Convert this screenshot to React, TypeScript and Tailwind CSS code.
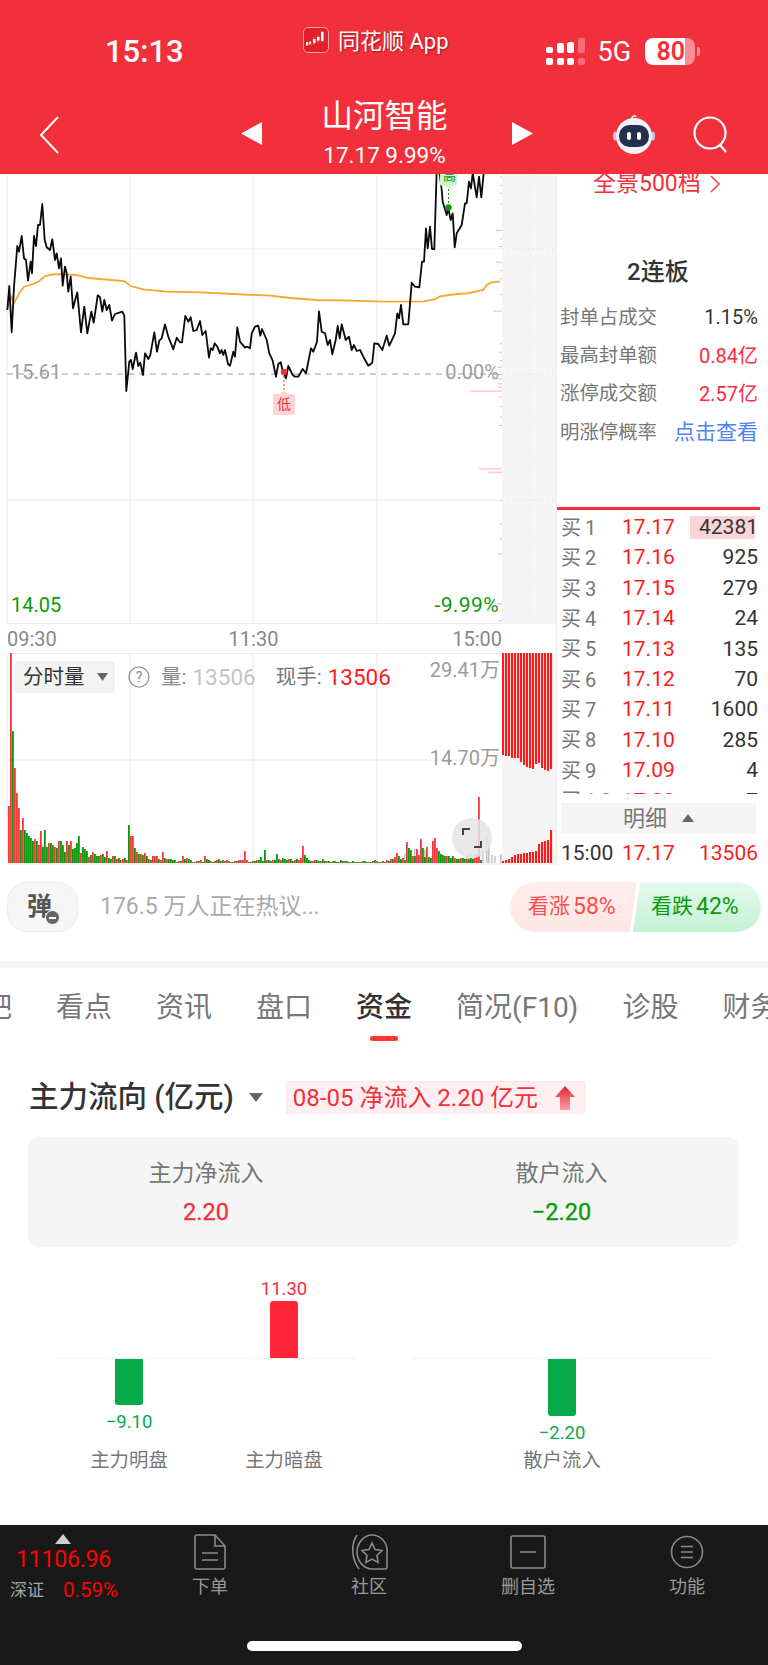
import React from "react";

const font = { fontFamily: 'Roboto, "Noto Sans CJK SC", sans-serif' };

const priceZ: number[][] = [[22,420],[28,348],[35,487],[42,350],[52,228],[57,245],[65,198],[72,265],[78,270],[84,332],[92,275],[96,310],[102,198],[108,228],[114,165],[120,165],[127,102],[134,210],[140,232],[150,240],[157,208],[165,270],[170,250],[177,295],[183,265],[188,347],[195,290],[200,310],[205,365],[212,320],[219,415],[232,367],[243,487],[253,410],[262,490],[274,425],[281,458],[293,376],[300,382],[307,425],[313,390],[320,420],[328,405],[336,452],[345,432],[358,428],[367,425],[373,437],[379,663],[388,575],[393,570],[398,597],[408,548],[415,588],[421,578],[429,615],[435,550],[445,567],[451,555],[463,487],[471,545],[478,512],[485,505],[495,463],[505,500],[520,538],[530,503],[540,517],[546,517],[556,438],[565,455],[572,442],[580,483],[590,480],[600,453],[607,495],[617,483],[627,563],[632,535],[638,540],[644,520],[652,530],[660,550],[665,540],[670,555],[675,540],[684,582],[690,587],[700,545],[705,560],[712,472],[720,515],[735,533],[742,530],[750,535],[755,490],[765,470],[775,467],[781,497],[786,477],[800,510],[808,550],[818,572],[828,620],[835,582],[842,577],[848,603],[858,625],[865,588],[878,615],[885,620],[895,620],[908,597],[918,610],[933,535],[940,545],[951,515],[957,424],[965,485],[975,490],[983,525],[990,510],[997,553],[1007,510],[1013,468],[1019,505],[1025,463],[1037,510],[1047,500],[1055,540],[1062,525],[1070,543],[1080,540],[1090,560],[1105,587],[1117,578],[1123,520],[1135,522],[1147,540],[1160,497],[1168,527],[1185,490],[1192,430],[1197,445],[1203,405],[1210,463],[1225,463],[1235,338],[1245,350],[1258,352],[1266,275],[1272,275],[1278,175],[1283,235],[1290,170],[1296,237],[1303,237],[1310,0],[1318,0],[1325,60],[1328,95],[1340,135],[1345,115],[1352,150],[1358,130],[1364,232],[1370,190],[1385,165],[1395,100],[1400,100],[1407,35],[1413,55],[1418,10],[1430,82],[1437,20],[1444,82],[1452,0]];
const avgZ: number[][] = [[22,415],[35,380],[42,400],[60,365],[72,350],[100,342],[115,335],[135,318],[160,313],[185,312],[235,316],[265,324],[300,327],[373,333],[392,348],[430,358],[500,365],[600,367],[700,372],[810,377],[870,384],[950,390],[1050,392],[1150,395],[1270,394],[1305,388],[1320,379],[1370,372],[1400,370],[1450,360],[1460,345],[1475,337],[1500,335]];
const toPts = (a: number[][]) => a.map(([x, y]) => `${(x / 3).toFixed(1)},${(y / 3 - 4).toFixed(1)}`).join(" ");

const ticks: number[][] = [[20,2],[45,2],[68,3],[100,2],[180,6],[205,2],[228,3],[275,6],[300,2],[325,3],[372,2],[422,9],[520,2],[545,3],[570,2],[590,4],[612,5],[625,10],[640,5],[650,4],[662,32],[680,3],[708,2],[740,2],[765,3],[895,23],[905,14],[990,2],[1060,3],[1105,2],[1150,4],[1300,5],[1350,3]];

const vol: number[] = [57,210,-132,95,70,55,-33,45,-33,-30,-27,-25,-22,24,-22,18,32,-16,-33,-16,20,-20,-18,16,-15,22,-22,-18,-11,22,-18,22,-14,-15,-20,-27,10,-16,-14,-12,6,-8,11,-9,-7,-7,8,-9,-6,12,-5,-4,7,-7,4,-5,3,4,-5,3,
-38,27,27,-15,11,-9,9,-8,10,-7,4,-3,7,7,7,-4,3,11,-5,4,-4,-4,-3,-3,1,2,-2,7,-4,5,-4,-3,1,-1,2,-2,3,-1,7,-4,-3,2,-1,-2,3,-4,2,-3,2,3,-2,1,1,2,-2,3,3,3,12,3,
-1,-1,2,-2,3,-3,-6,-2,-13,3,-3,-2,3,-3,-9,-4,3,-5,-4,-3,4,-4,-2,3,-4,3,5,17,-8,-5,-3,-2,2,3,-3,-2,2,-4,-2,2,-2,-1,2,-2,-1,1,-3,-2,2,-2,-1,1,-2,-1,1,-1,-1,2,-2,-1,
1,-1,2,-3,2,-1,1,-2,1,3,-2,4,-4,6,10,-7,-4,5,-3,21,-15,-13,7,-7,14,8,24,-15,-6,16,-6,-5,22,25,15,-12,-9,-8,-7,7,-7,-5,-7,5,-4,-4,5,-5,-4,4,-4,-5,-4,5,8,66,-3];
const grays: number[][] = [[38,18],[40,20],[42,18],[46,16],[48,17],[50,15],[404,9],[406,10],[414,14],[416,12],[420,16],[424,13],[466,8],[468,9],[470,9],[472,8],[474,9],[476,9],[478,8],[482,12],[486,27],[488,18],[491,8],[494,7],[500,9]];

const stripTop = [102,103,103,105,105,105,109,112,114,115,116,111,110,115,117,118,116];
const stripBottom = [2,3,4,6,8,9,9,10,10,11,11,12,19,21,22,23,33];

const book: [string, string, string][] = [["买1","17.17","42381"],["买2","17.16","925"],["买3","17.15","279"],["买4","17.14","24"],["买5","17.13","135"],["买6","17.12","70"],["买7","17.11","1600"],["买8","17.10","285"],["买9","17.09","4"],["买10","17.08","7"]];
const stats: [string, string, string][] = [["封单占成交","1.15%","text-[20px] text-[#333333]"],["最高封单额","0.84亿","text-[20px] text-[#ff2a3c]"],["涨停成交额","2.57亿","text-[20px] text-[#ff2a3c]"],["明涨停概率","点击查看","text-[21px] text-[#4f82f5]"]];
const tabs = ["股吧","看点","资讯","盘口","资金","简况(F10)","诊股","财务"];

function Robot() {
  return (
    <svg width="44" height="40" viewBox="0 0 44 40">
      <path d="M20 6 C19 2 23 1 24 3" fill="none" stroke="#e8e8f6" strokeWidth="1.6" />
      <circle cx="20" cy="7" r="1.8" fill="#f3f3fb" />
      <ellipse cx="3" cy="22" rx="2" ry="4.5" fill="#c9c6ee" />
      <ellipse cx="41" cy="22" rx="2" ry="4.5" fill="#c9c6ee" />
      <circle cx="22" cy="22" r="18" fill="#f1f1fb" />
      <rect x="7" y="11" width="30" height="22" rx="10.5" fill="#23304f" />
      <rect x="15" y="18" width="4" height="8" rx="2" fill="#ffffff" />
      <rect x="25" y="18" width="4" height="8" rx="2" fill="#ffffff" />
    </svg>
  );
}

function AppIcon() {
  return (
    <div className="w-[26px] h-[26px] rounded-[5px] bg-[#e3202b] border border-[#f7a0a4] flex items-center justify-center">
      <svg width="22" height="18" viewBox="0 0 22 18" fill="#ffffff">
        <rect x="1" y="11" width="2.200" height="3.500" />
        <rect x="4" y="10.500" width="2.200" height="3" opacity="0.8" />
        <rect x="8" y="8" width="2.500" height="4" />
        <rect x="12" y="6" width="2.500" height="3.500" />
        <rect x="16" y="1" width="2.500" height="9" />
        <path d="M9 6.500v7M13 4.500v6.500M17 0v11" stroke="#ffffff" strokeWidth="0.6" fill="none" />
      </svg>
    </div>
  );
}

function MainChart() {
  return (
    <div className="relative w-[502px] h-[450px]">
      <svg width="502" height="450" className="block">
        {[7, 130, 253, 377].map((x) => <line key={x} x1={x} x2={x} y1="0" y2="450" stroke="#ececec" strokeWidth="1.2" />)}
        {[75, 326, 449.5].map((y) => <line key={y} x1="7" x2="502" y1={y} y2={y} stroke="#ececec" strokeWidth="1.2" />)}
        <line x1="7" x2="502" y1="200" y2="200" stroke="#9c9c9c" strokeWidth="1" strokeDasharray="6 5" />
        {ticks.map(([y, l], i) => <rect key={i} x={502 - l} y={y / 3 - 4} width={l} height="1" fill="#fbb4b4" />)}
        <polyline points={toPts(avgZ)} fill="none" stroke="#f8a62c" strokeWidth="1.8" />
        <polyline points={toPts(priceZ)} fill="none" stroke="#0a0a0a" strokeWidth="1.8" strokeLinejoin="round" />
        <line x1="284" x2="284" y1="198" y2="218" stroke="#f2303b" strokeWidth="1" strokeDasharray="2 2" />
        <circle cx="284" cy="198" r="3.2" fill="#f2303b" />
        <path d="M275 220h5l4-3 4 3h5a2 2 0 0 1 2 2v17a2 2 0 0 1-2 2h-18a2 2 0 0 1-2-2v-17a2 2 0 0 1 2-2z" fill="#fdd5d7" />
        <path d="M440 0h17v10a2 2 0 0 1-2 2h-3l-3 3-3-3h-4a2 2 0 0 1-2-2z" fill="#cdf0cd" />
        <line x1="448.5" x2="448.5" y1="15" y2="33" stroke="#0a9a0a" strokeWidth="1" strokeDasharray="2 2" />
        <circle cx="448.5" cy="33.5" r="3.2" fill="#0a9a0a" />
      </svg>
      <span className="absolute left-[277px] top-[220px] text-[14px] leading-[20px] text-[#f2303b] whitespace-nowrap">低</span>
      <span className="absolute left-[443px] top-[-7px] text-[13px] leading-[18px] text-[#0a9a0a]">高</span>
      <span className="absolute left-[11px] top-[186px] text-[20px] leading-[24px] text-[#9c9c9c]">15.61</span>
      <span className="absolute right-[3px] top-[186px] text-[20px] leading-[24px] text-[#9c9c9c]">0.00%</span>
      <span className="absolute left-[11px] top-[419px] text-[20px] leading-[24px] text-[#0a9a0a]">14.05</span>
      <span className="absolute right-[3px] top-[419px] text-[21px] tracking-[0.4px] leading-[24px] text-[#0a9a0a]">-9.99%</span>
    </div>
  );
}

function VolChart() {
  return (
    <div className="relative w-[502px] h-[212px]">
      <svg width="502" height="212" className="block">
        {[7, 130, 253, 377].map((x) => <line key={x} x1={x} x2={x} y1="0" y2="211" stroke="#ececec" strokeWidth="1.2" />)}
        {[0.5, 107, 211].map((y) => <line key={y} x1="7" x2="502" y1={y} y2={y} stroke="#ececec" strokeWidth="1.2" />)}
        {grays.map(([x, h], i) => <rect key={i} x={x} y={210 - h} width="1.6" height={h} fill="#c4c4c4" />)}
        {vol.map((v, i) => <rect key={i} x={8 + i * 2} y={210 - Math.abs(v)} width="1.8" height={Math.abs(v)} fill={v > 0 ? "#f2383c" : "#0a960a"} />)}
      </svg>
      <div className="absolute left-[14px] top-[8px] flex items-center text-[20.5px] leading-[32px] text-[#333333] whitespace-nowrap">
        <div className="w-[101px] h-[32px] bg-[#f3f3f3] rounded-[4px] flex items-center pl-[9px]">
          <span>分时量</span>
          <svg width="11" height="8" viewBox="0 0 11 8" className="ml-[12px]"><path d="M0 0h11L5.5 8z" fill="#666" /></svg>
        </div>
        <svg width="22" height="22" viewBox="0 0 22 22" className="ml-[13px]">
          <circle cx="11" cy="11" r="10" fill="none" stroke="#8a8a8a" strokeWidth="1.2" />
          <text x="11" y="16" textAnchor="middle" fontSize="14" fill="#8a8a8a">?</text>
        </svg>
        <span className="ml-[11px] text-[#888888]">量:</span>
        <span className="ml-[6px] text-[22.5px] text-[#c4c4c4]">13506</span>
        <span className="ml-[20px] text-[#777777]">现手:</span>
        <span className="ml-[6px] text-[22.5px] text-[#ff1a1a]">13506</span>
      </div>
      <span className="absolute right-[2px] top-[5px] text-[20px] leading-[24px] text-[#9c9c9c]">29.41万</span>
      <span className="absolute right-[2px] top-[93px] text-[20px] leading-[24px] text-[#9c9c9c]">14.70万</span>
      <div className="absolute left-[452px] top-[165px] w-[40px] h-[40px] rounded-full bg-[#e4e4e4]/85 flex items-center justify-center">
        <svg width="20" height="20" viewBox="0 0 20 20" fill="none" stroke="#444" strokeWidth="2">
          <path d="M1 7V1h7M19 13v6h-7" />
        </svg>
      </div>
    </div>
  );
}

function Strip() {
  return (
    <div className="w-[55px] h-[691px] bg-[#f5f5f5] flex flex-col border-r border-[#ececec]">
      <svg width="54" height="450" className="block">
        <line x1="28" x2="28" y1="0" y2="450" stroke="#e6e6e6" strokeDasharray="2 3" />
        {[75, 200, 326].map((y) => <line key={y} x1="0" x2="54" y1={y} y2={y} stroke="#e6e6e6" strokeDasharray="2 3" />)}
      </svg>
      <div className="h-[29px] bg-white" />
      <svg width="54" height="212" className="block">
        {stripTop.map((h, i) => <rect key={i} x={i * 3} y="0" width="2.1" height={h} fill="#ff1a1a" />)}
        {stripBottom.map((h, i) => <rect key={i} x={i * 3} y={210 - h} width="2.1" height={h} fill="#ff1a1a" />)}
      </svg>
    </div>
  );
}

function RightPanel() {
  return (
    <div className="w-[211px] h-[700px] flex flex-col overflow-hidden">
      <div className="h-[24px] mt-[-2px] pl-[36px] flex items-center text-[23px] leading-[26px] text-[#f2303b] whitespace-nowrap">
        <span>全景500档</span>
        <svg width="11" height="18" viewBox="0 0 11 18" fill="none" stroke="#f2303b" strokeWidth="1.4" className="ml-[9px]"><path d="M1 1l8 8-8 8" /></svg>
      </div>
      <div className="mt-[62px] h-[28px] ml-[70px] text-[24px] leading-[28px] font-medium text-[#333333] whitespace-nowrap">2连板</div>
      <div className="mt-[12px] pl-[3px] pr-[10px]">
        {stats.map(([l, v, c]) => (
          <div key={l} className="h-[38.4px] flex items-center justify-between whitespace-nowrap">
            <span className="text-[19.4px] text-[#777777]">{l}</span>
            <span className={c}>{v}</span>
          </div>
        ))}
      </div>
      <div className="mt-[55px] h-[3px] w-[203px] bg-[#ee3338]" />
      <div className="mt-[3px] h-[281px] overflow-hidden pl-[4px] pr-[10px]">
        {book.map(([a, b, c], i) => (
          <div key={a} className="h-[30.4px] flex items-center text-[21px] whitespace-nowrap">
            <span className="w-[61px] text-[20px] text-[#777777] tracking-[4px]">{a}</span>
            <span className="text-[#ff1a1a]">{b}</span>
            {i === 0 ? (
              <span className="ml-auto w-[65px] h-[23px] mr-[3px] bg-[#f9d5d5] flex items-center justify-end text-[#333333]"><span className="mr-[-3px]">{c}</span></span>
            ) : (
              <span className="ml-auto text-[#333333]">{c}</span>
            )}
          </div>
        ))}
      </div>
      <div className="mt-[9px] ml-[4px] w-[195px] h-[31px] bg-[#f5f5f5] flex items-center justify-center text-[22px] text-[#777777]">
        <span>明细</span>
        <svg width="12" height="8" viewBox="0 0 12 8" className="ml-[15px]"><path d="M6 0l6 8H0z" fill="#666" /></svg>
      </div>
      <div className="mt-[5px] h-[30px] pl-[4px] pr-[10px] flex items-center text-[21px] whitespace-nowrap">
        <span className="w-[61px] text-[#333333]">15:00</span>
        <span className="text-[#ff1a1a]">17.17</span>
        <span className="ml-auto text-[#ff1a1a]">13506</span>
      </div>
    </div>
  );
}

function BarGroup({ pad, items }: { pad: string; items: { gap: string; name: string; v: string; h: string; up: boolean }[] }) {
  return (
    <div className="w-[298px]">
      <div className={`h-[90px] border-b border-[#f2f2f2] flex items-end ${pad}`}>
        {items.map((it) => (
          <div key={it.name} className={`w-[90px] flex flex-col items-center ${it.gap}`}>
            {it.up && <span className="text-[18.5px] leading-[22px] mb-[1px] text-[#ff2a3c]">{it.v}</span>}
            {it.up && <div className={`w-[28px] ${it.h} bg-[#ff263a] rounded-t-[3px]`} />}
          </div>
        ))}
      </div>
      <div className={`h-[88px] flex items-start ${pad}`}>
        {items.map((it) => (
          <div key={it.name} className={`w-[90px] flex flex-col items-center ${it.gap}`}>
            {!it.up && <div className={`w-[28px] ${it.h} bg-[#07aa4a] rounded-b-[3px]`} />}
            {!it.up && <span className="text-[18.5px] leading-[22px] mt-[6px] text-[#07aa4a]">{it.v}</span>}
          </div>
        ))}
      </div>
      <div className={`flex ${pad}`}>
        {items.map((it) => (
          <div key={it.name} className={`w-[90px] text-center text-[19.4px] leading-[28px] text-[#777777] ${it.gap}`}>{it.name}</div>
        ))}
      </div>
    </div>
  );
}

function BottomTab({ w, label, children }: { w: string; label: string; children: React.ReactNode }) {
  return (
    <div className={`${w} flex flex-col items-center pt-[9px]`}>
      <div className="h-[36px] flex items-center justify-center">{children}</div>
      <span className="mt-[5px] text-[18px] leading-[24px] text-[#999999]">{label}</span>
    </div>
  );
}

export default function App() {
  return (
    <div style={font} className="w-[768px] h-[1665px] overflow-hidden bg-white flex flex-col relative">
      <header className="h-[174px] shrink-0 bg-[#f2303b] flex flex-col relative z-10 text-white">
        <div className="h-[90px] flex items-start">
          <div className="ml-[105px] w-[198px] mt-[34px] text-[31px] leading-[36px] font-medium">15:13</div>
          <div className="w-[243px] mt-[27px] flex items-start">
            <AppIcon />
            <span className="ml-[9px] text-[22px] leading-[30px] [text-shadow:1px_1px_2px_rgba(90,0,0,0.55)] whitespace-nowrap">同花顺 App</span>
          </div>
          <div className="mt-[38px] flex items-end gap-[3.5px] h-[27px]">
            {[6, 10, 11, 15].map((h, i) => (
              <div key={i} className="flex flex-col gap-[5px]">
                <div style={{ height: h }} className={`w-[7px] rounded-[2px] ${i === 3 ? "bg-white/30" : "bg-white"}`} />
                <div className={`w-[7px] h-[7px] rounded-[2px] ${i === 3 ? "bg-white/30" : "bg-white"}`} />
              </div>
            ))}
          </div>
          <div className="ml-[13px] mt-[35px] text-[27px] leading-[34px]">5G</div>
          <div className="ml-[14px] mt-[38px] w-[50px] h-[27px] rounded-[8px] bg-white/45 overflow-hidden">
            <div className="w-[40px] h-[27px] bg-white rounded-l-[8px] flex items-center justify-end text-[#f2303b] text-[25px] font-semibold leading-[27px]">80</div>
          </div>
          <div className="ml-[2px] mt-[47px] w-[3px] h-[9px] bg-white/45 rounded-r-[2px]" />
        </div>
        <div className="h-[84px] flex items-start relative">
          <svg width="22" height="38" viewBox="0 0 22 38" fill="none" stroke="#ffffff" strokeWidth="2" className="ml-[39px] mt-[26px]"><path d="M19 1L2 19l17 18" /></svg>
          <svg width="21" height="23" viewBox="0 0 21 23" className="ml-[180px] mt-[32px]"><path d="M21 0v23L0 11.5z" fill="#ffffff" /></svg>
          <div className="w-[250px] pr-[5px] flex flex-col items-center">
            <span className="text-[31.5px] leading-[44px] mt-[5px] whitespace-nowrap">山河智能</span>
            <span className="text-[22.5px] leading-[28px] mt-[2px] whitespace-nowrap">17.17 9.99%</span>
          </div>
          <svg width="21" height="23" viewBox="0 0 21 23" className="mt-[32px]"><path d="M0 0v23l21-11.5z" fill="#ffffff" /></svg>
          <div className="ml-[79px] mt-[24px]"><Robot /></div>
          <svg width="36" height="38" viewBox="0 0 36 38" fill="none" stroke="#ffffff" strokeWidth="2.2" className="ml-[37px] mt-[26px]">
            <circle cx="17" cy="17" r="15.5" /><path d="M27 29l6 7" />
          </svg>
        </div>
      </header>

      <section className="h-[700px] shrink-0 flex">
        <div className="w-[557px] flex items-start">
          <div className="w-[502px] flex flex-col">
            <MainChart />
            <div className="h-[29px] relative flex items-center justify-between pl-[7px] text-[20px] text-[#888888]">
              <span>09:30</span>
              <span className="mr-[2px]">11:30</span>
              <span>15:00</span>
            </div>
            <VolChart />
          </div>
          <Strip />
        </div>
        <RightPanel />
      </section>

      <section className="h-[87px] shrink-0 pt-[8px] flex items-start">
        <div className="ml-[7px] w-[71px] h-[50px] rounded-[20px] bg-[#f6f6f6] border border-[#ececec] flex items-center justify-center relative">
          <span className="text-[25px] font-bold text-[#555555] mr-[6px]">弹</span>
          <div className="absolute left-[37px] top-[27px] w-[15px] h-[15px] rounded-full bg-[#666666] flex items-center justify-center border border-white"><div className="w-[7px] h-[2px] bg-white" /></div>
        </div>
        <span className="ml-[22px] mt-[9px] text-[23px] leading-[32px] text-[#aaaaaa] whitespace-nowrap">176.5 万人正在热议...</span>
        <div className="ml-auto mr-[7px] flex">
          <div className="w-[127px] h-[50px] rounded-l-[25px] bg-gradient-to-b from-[#ffeeec] to-[#ffe6e4] [clip-path:polygon(0_0,100%_0,calc(100%-7px)_100%,0_100%)] flex items-center pl-[18px] text-[21px] text-[#ff4d4d] whitespace-nowrap">看涨<span className="ml-[3px] text-[23px]">58%</span></div>
          <div className="w-[128px] h-[50px] -ml-[4px] rounded-r-[25px] bg-gradient-to-b from-[#e6f9ee] to-[#c2f2d4] [clip-path:polygon(7px_0,100%_0,100%_100%,0_100%)] flex items-center pl-[18px] text-[21px] text-[#0a9a0a] whitespace-nowrap">看跌<span className="ml-[3px] text-[23px]">42%</span></div>
        </div>
      </section>

      <div className="h-[7px] shrink-0 bg-[#f5f5f5]" />

      <nav className="h-[73px] shrink-0 pt-[20px] flex gap-[44px] -ml-[44px] whitespace-nowrap overflow-visible">
        {tabs.map((t) => (
          <div key={t} className="flex flex-col items-center shrink-0">
            <span className={t === "资金" ? "text-[28px] leading-[40px] font-medium text-[#333333]" : "text-[28px] leading-[40px] text-[#777777]"}>{t}</span>
            {t === "资金" && <div className="mt-[8px] w-[28px] h-[5px] rounded-full bg-[#ff3535]" />}
          </div>
        ))}
      </nav>

      <div className="mt-[40px] h-[33px] shrink-0 flex items-center">
        <span className="ml-[29px] text-[29.5px] font-medium text-[#333333] whitespace-nowrap">主力流向 (亿元)</span>
        <svg width="14" height="9" viewBox="0 0 14 9" className="ml-[15px]"><path d="M0 0h14L7 9z" fill="#666" /></svg>
        <div className="ml-[23px] w-[299px] h-[33px] rounded-[2px] bg-[#ffeff0] border border-[#fde4e5] flex items-center pl-[6px] pr-[9px] text-[24px] text-[#f2303b] whitespace-nowrap">
          <span>08-05 净流入 2.20 亿元</span>
          <svg width="20" height="24" viewBox="0 0 20 24" className="ml-auto">
            <defs><linearGradient id="ar" x1="0" y1="0" x2="0" y2="1"><stop offset="0" stopColor="#e8242f" /><stop offset="1" stopColor="#f7a0a4" /></linearGradient></defs>
            <path d="M10 0l10 11h-5v13H5V11H0z" fill="url(#ar)" />
          </svg>
        </div>
      </div>

      <div className="mt-[23px] ml-[28px] w-[711px] h-[110px] shrink-0 rounded-[12px] bg-[#f5f5f5] flex">
        <div className="w-[356px] flex flex-col items-center pt-[22px]">
          <span className="text-[23px] leading-[30px] text-[#777777]">主力净流入</span>
          <span className="mt-[8px] text-[23.5px] leading-[30px] text-[#f2303b] [-webkit-text-stroke:0.3px_#f2303b]">2.20</span>
        </div>
        <div className="w-[355px] flex flex-col items-center pt-[22px]">
          <span className="text-[23px] leading-[30px] text-[#777777]">散户流入</span>
          <span className="mt-[8px] text-[23.5px] leading-[30px] text-[#0a9a0a] [-webkit-text-stroke:0.3px_#0a9a0a]">−2.20</span>
        </div>
      </div>

      <div className="mt-[22px] ml-[57px] shrink-0 flex gap-[58px]">
        <BarGroup pad="pl-[27px]" items={[
          { gap: "", name: "主力明盘", v: "−9.10", h: "h-[46px]", up: false },
          { gap: "ml-[65px]", name: "主力暗盘", v: "11.30", h: "h-[57px]", up: true },
        ]} />
        <BarGroup pad="pl-[104px]" items={[
          { gap: "", name: "散户流入", v: "−2.20", h: "h-[57px]", up: false },
        ]} />
      </div>

      <footer className="absolute left-0 top-[1525px] w-[768px] h-[140px] bg-[#191919] flex items-start">
        <div className="w-[131px] pt-[9px] flex flex-col">
          <svg width="16" height="10" viewBox="0 0 16 10" className="ml-[55px]"><path d="M8 0l8 10H0z" fill="#cfcfcf" /></svg>
          <span className="ml-[16px] text-[23px] tracking-[-0.2px] leading-[30px] mt-[1px] text-[#ff0000]">11106.96</span>
          <div className="flex items-center mt-[2px] whitespace-nowrap">
            <span className="ml-[10px] text-[17px] leading-[26px] text-[#a6a6a6]">深证</span>
            <span className="ml-[19px] text-[20.5px] leading-[26px] text-[#ff0000]">0.59%</span>
          </div>
        </div>
        <BottomTab w="w-[158px]" label="下单">
          <svg width="32" height="36" viewBox="0 0 32 36" fill="none" stroke="#8a8a8a" strokeWidth="1.6">
            <path d="M3 1h18l10 11v21a2 2 0 0 1-2 2H3a2 2 0 0 1-2-2V3a2 2 0 0 1 2-2zM21 1v11h10M8 19h16M8 26h16" />
          </svg>
        </BottomTab>
        <BottomTab w="w-[160px]" label="社区">
          <svg width="38" height="36" viewBox="0 0 38 36" fill="none" stroke="#8a8a8a" strokeWidth="1.6">
            <path d="M7 1C1 10 1 24 9 35" />
            <path d="M22 1c8 0 15 7 15 15v17a2 2 0 0 1-2 2H22c-8 0-15-8-15-17S14 1 22 1z" />
            <path d="M22 9l3 6.5 7 1-5 5 1.2 7-6.2-3.4-6.200 3.400 1.200-7-5-5 7-1z" />
          </svg>
        </BottomTab>
        <BottomTab w="w-[158px]" label="删自选">
          <svg width="36" height="34" viewBox="0 0 36 34" fill="none" stroke="#8a8a8a" strokeWidth="1.6">
            <rect x="1" y="1" width="34" height="32" rx="2" /><path d="M10 17h16" />
          </svg>
        </BottomTab>
        <BottomTab w="w-[160px]" label="功能">
          <svg width="34" height="34" viewBox="0 0 34 34" fill="none" stroke="#8a8a8a" strokeWidth="1.6">
            <circle cx="17" cy="17" r="15.500" /><path d="M11 11.500h12M11 17h12M11 22.500h12" />
          </svg>
        </BottomTab>
      </footer>
      <div className="absolute left-[247px] top-[1641px] w-[275px] h-[10px] rounded-full bg-white" />
    </div>
  );
}
